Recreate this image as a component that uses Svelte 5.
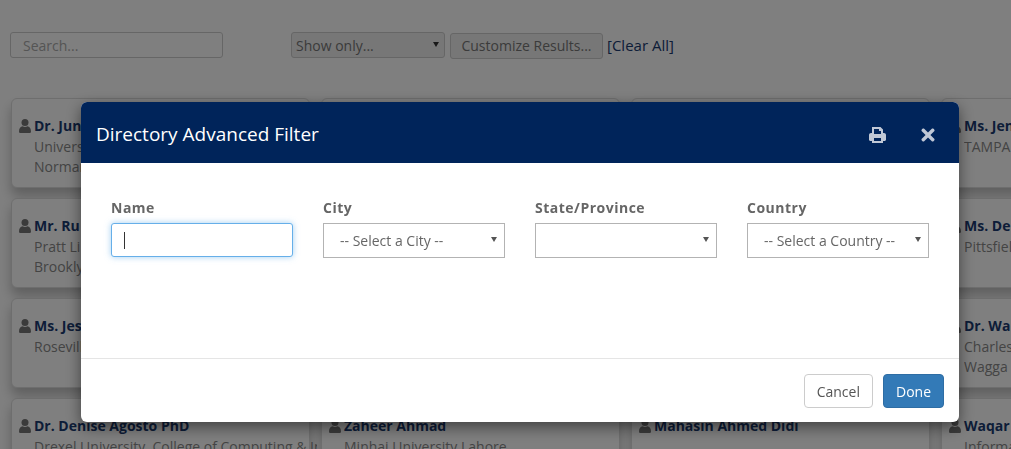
<script>
  // visible part of the directory behind the dialog
  const people = [
    { name: "Dr. Jun", lines: ["University", "Norman"] },
    {}, {},
    { name: "Ms. Jen", lines: ["TAMPA"] },
    { name: "Mr. Ru", lines: ["Pratt Li", "Brooklyn"] },
    {}, {},
    { name: "Ms. De", lines: ["Pittsfield"] },
    { name: "Ms. Jes", lines: ["Roseville"] },
    {}, {},
    { name: "Dr. Wa", lines: ["Charles", "Wagga"] },
    { name: "Dr. Denise Agosto PhD", lines: ["Drexel University, College of Computing & Informatics"] },
    { name: "Zaheer Ahmad", lines: ["Minhaj University Lahore"] },
    { name: "Mahasin Ahmed Didi", lines: [] },
    { name: "Waqar", lines: ["Information"] }
  ];

  const filters = [
    { label: "City", placeholder: "-- Select a City --" },
    { label: "State/Province", placeholder: "" },
    { label: "Country", placeholder: "-- Select a Country --" }
  ];
</script>

<main class="page">
  <div class="toolbar">
    <input class="search" type="text" placeholder="Search..." />
    <div class="show-only">Show only...</div>
    <button class="customize">Customize Results...</button>
    <a class="clear" href="#clear">[Clear All]</a>
  </div>

  <div class="cards">
    {#each people as person}
      <div class="card">
        {#if person.name}
          <div class="name">
            <svg class="user" viewBox="0 0 12 14" aria-hidden="true">
              <circle cx="6" cy="3.6" r="3.5" />
              <path d="M0 12.4C0 9.2 1.600 7.600 3.600 7.200 4.300 7.800 5.100 8 6 8S7.700 7.800 8.400 7.200C10.400 7.600 12 9.200 12 12.400 12 13.400 11.300 14 10.400 14H1.600C.7 14 0 13.400 0 12.400Z" />
            </svg>
            <span>{person.name}</span>
          </div>
          {#each person.lines as line}
            <div class="line">{line}</div>
          {/each}
        {/if}
      </div>
    {/each}
  </div>
</main>

<div class="backdrop"></div>

<div class="modal">
  <header>
    <h4>Directory Advanced Filter</h4>
    <svg class="print" viewBox="0 0 17 16" aria-hidden="true">
      <path fill-rule="evenodd" d="M3 0H11.500L14 2.500V6H15C16.100 6 17 6.900 17 8V12.500C17 13.300 16.300 14 15.500 14H14V16H3V14H1.500C.7 14 0 13.300 0 12.500V8C0 6.900 .9 6 2 6H3ZM5 2V7H12V4H10V2ZM5 11V14H12V11Z" />
    </svg>
    <svg class="close" viewBox="0 0 14 14" aria-hidden="true">
      <path d="M3.200 .8 7 4.600 10.800 .8C11.300 .3 12 .3 12.500 .8L13.200 1.500C13.700 2 13.700 2.700 13.200 3.200L9.400 7 13.200 10.800C13.700 11.300 13.700 12 13.200 12.500L12.500 13.200C12 13.700 11.300 13.700 10.800 13.200L7 9.400 3.200 13.200C2.700 13.700 2 13.700 1.500 13.200L.8 12.500C.3 12 .3 11.300 .8 10.800L4.600 7 .8 3.200C.3 2.700 .3 2 .8 1.500L1.500 .8C2 .3 2.700 .3 3.200 .8Z" />
    </svg>
  </header>

  <div class="body">
    <div class="field">
      <span class="label">Name</span>
      <div class="name-input">
        <input type="text" />
        <span class="caret"></span>
      </div>
    </div>
    {#each filters as filter}
      <div class="field">
        <span class="label">{filter.label}</span>
        <div class="select">{filter.placeholder}</div>
      </div>
    {/each}
  </div>

  <footer>
    <button class="btn">Cancel</button>
    <button class="btn primary">Done</button>
  </footer>
</div>

<style>
  :global(body) {
    margin: 0;
    background: #fff;
    overflow: hidden;
    font-family: "Open Sans", sans-serif;
    font-size: 14px;
    color: #888;
  }
  .page {
    height: 449px;
    overflow: hidden;
    box-sizing: border-box;
    padding: 32px 0 0 10px;
  }
  .toolbar {
    display: flex;
    align-items: flex-start;
    height: 27px;
  }
  .search {
    width: 213px;
    height: 26px;
    box-sizing: border-box;
    border: 1px solid #ccc;
    border-radius: 3px;
    padding: 0 12px;
    font: inherit;
    background: #fff;
    color: #555;
  }
  .search::placeholder {
    color: #aaa;
    opacity: 1;
  }
  .show-only {
    position: relative;
    width: 154px;
    height: 26px;
    box-sizing: border-box;
    margin-left: 68px;
    padding-left: 4px;
    line-height: 26px;
    border: 1px solid #ccc;
    border-radius: 3px;
    background: #eee;
    color: #777;
  }
  .show-only::after,
  .select::after {
    content: "";
    position: absolute;
    top: 13px;
    right: 7px;
    border: 3px solid transparent;
    border-top: 5px solid #555;
    border-bottom: 0;
  }
  .show-only::after {
    top: 9px;
    right: 5px;
    border-top-color: #333;
  }
  .customize {
    width: 153px;
    height: 26px;
    margin: 1px 0 0 5px;
    padding: 0 0 1px;
    border: 1px solid #ccc;
    border-radius: 3px;
    background: #eee;
    font: inherit;
    color: #777;
  }
  .clear {
    margin: 3px 0 0 4px;
    font-size: 15px;
    line-height: 20px;
    color: #1a3a70;
    text-decoration: none;
    white-space: nowrap;
  }
  .cards {
    display: grid;
    grid-template-columns: repeat(4, 299px);
    grid-auto-rows: 90px;
    gap: 10px 11px;
    margin: 39px 0 0 1px;
    width: 1300px;
  }
  .card {
    box-sizing: border-box;
    border: 1px solid #ddd;
    border-radius: 6px;
    padding: 17px 0 0 7px;
    background: #fff;
    box-shadow: 0 8px 12px rgba(0, 0, 0, 0.25);
    line-height: 20px;
  }
  .name {
    display: flex;
    align-items: center;
    gap: 3px;
    height: 20px;
    margin-bottom: 1px;
    font-weight: 700;
    color: #1a3a70;
    white-space: nowrap;
  }
  .user {
    width: 12px;
    height: 14px;
    fill: #777;
    flex: none;
  }
  .line {
    width: 283px;
    margin-left: 15px;
    overflow: hidden;
    white-space: nowrap;
  }
  .backdrop {
    position: fixed;
    inset: 0;
    background: rgba(0, 0, 0, 0.5);
  }
  .modal {
    position: fixed;
    top: 102px;
    left: 81px;
    width: 878px;
    height: 320px;
    display: flex;
    flex-direction: column;
    border-radius: 6px;
    overflow: hidden;
    background: #fff;
    box-shadow: 0 5px 15px rgba(0, 0, 0, 0.5);
  }
  header {
    display: flex;
    align-items: center;
    height: 61px;
    flex: none;
    box-sizing: border-box;
    padding: 4px 24px 0 15px;
    background: #00245a;
    color: #fff;
  }
  h4 {
    margin: 0;
    flex: 1;
    font-size: 19px;
    font-weight: 400;
    line-height: 25px;
  }
  .print {
    width: 17px;
    height: 16px;
    fill: #c0c8d6;
  }
  .close {
    width: 14px;
    height: 14px;
    margin-left: 35px;
    fill: #c0c8d6;
  }
  .body {
    flex: 1;
    display: grid;
    grid-template-columns: repeat(4, 182px);
    gap: 30px;
    align-content: start;
    padding: 35px 30px 0;
  }
  .field {
    display: flex;
    flex-direction: column;
  }
  .label {
    height: 25px;
    line-height: 20px;
    font-weight: 700;
    letter-spacing: 0.5px;
    color: #666;
  }
  .name-input {
    position: relative;
  }
  .name-input input {
    display: block;
    width: 100%;
    height: 34px;
    box-sizing: border-box;
    border: 1px solid #66afe9;
    border-radius: 3px;
    outline: none;
    box-shadow: 0 0 6px rgba(102, 175, 233, 0.6);
  }
  .caret {
    position: absolute;
    left: 13px;
    top: 9px;
    width: 1px;
    height: 17px;
    background: #333;
  }
  .select {
    position: relative;
    height: 35px;
    box-sizing: border-box;
    border: 1px solid #b3b3b3;
    padding-left: 16px;
    line-height: 34px;
    color: #666;
    white-space: nowrap;
  }
  footer {
    display: flex;
    justify-content: flex-end;
    gap: 10px;
    flex: none;
    padding: 15px 15px 14px;
    border-top: 1px solid #e5e5e5;
  }
  .btn {
    height: 34px;
    padding: 0 12px;
    border: 1px solid #ccc;
    border-radius: 4px;
    background: #fff;
    font: inherit;
    color: #555;
  }
  .primary {
    border-color: #2e6da4;
    background: #337ab7;
    color: #fff;
  }
</style>
